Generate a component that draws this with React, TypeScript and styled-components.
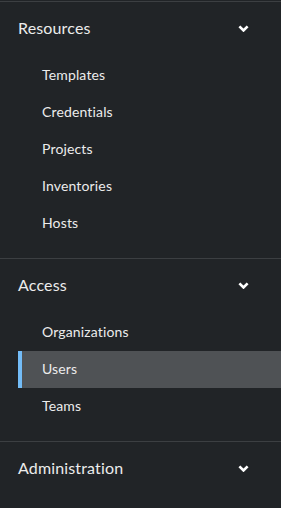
import styled, { createGlobalStyle } from 'styled-components';

type TSection = {
  title: string;
  items: string[];
};

const sections: TSection[] = [
  { title: 'Resources', items: ['Templates', 'Credentials', 'Projects', 'Inventories', 'Hosts'] },
  { title: 'Access', items: ['Organizations', 'Users', 'Teams'] },
  { title: 'Administration', items: [] },
];

const ACTIVE = 'Users';

const GlobalStyle = createGlobalStyle`
  html, body {
    margin: 0;
    padding: 0;
    background: #212427;
  }
  body {
    font-family: Lato, "Liberation Sans", sans-serif;
    -webkit-font-smoothing: antialiased;
  }
`;

function Chevron() {
  return (
    <svg width='11' height='7' viewBox='0 0 11 7' aria-hidden>
      <path d='M1.4 1.4 L5.5 5.4 L9.6 1.4' fill='none' stroke='#ffffff' strokeWidth='2.7' strokeLinejoin='miter' />
    </svg>
  );
}

export default function App() {
  return (
    <>
      <GlobalStyle />
      <StyledNav>
        {sections.map((section) => (
          <StyledSection key={section.title}>
            <StyledToggle>
              <StyledTitle>{section.title}</StyledTitle>
              <Chevron />
            </StyledToggle>
            {section.items.length > 0 && (
              <StyledList>
                {section.items.map((item) => (
                  <StyledItem key={item} active={item === ACTIVE}>
                    <StyledLabel>{item}</StyledLabel>
                  </StyledItem>
                ))}
              </StyledList>
            )}
          </StyledSection>
        ))}
      </StyledNav>
    </>
  );
}

const StyledNav = styled.nav`
  width: 281px;
  height: 508px;
  padding-top: 1px;
  box-sizing: border-box;
  background: #212427;
  overflow: hidden;
`;

const StyledSection = styled.section`
  border-top: 1px solid #3c3f42;
  padding: 8px 0 16px;
`;

const StyledToggle = styled.div`
  display: flex;
  align-items: center;
  justify-content: space-between;
  box-sizing: border-box;
  height: 37px;
  padding: 0 32px 0 18px;
`;

const StyledTitle = styled.span`
  font-size: 16px;
  letter-spacing: 0.15px;
  color: #ececec;
  padding-bottom: 2px;
`;

const StyledList = styled.ul`
  list-style: none;
  margin: 10px 0 0;
  padding: 0;
`;

const StyledItem = styled.li<{ active: boolean }>`
  display: flex;
  align-items: center;
  box-sizing: border-box;
  height: 37px;
  margin-left: 18px;
  padding-left: 20px;
  border-left: 4px solid ${({ active }) => (active ? '#73bcf7' : 'transparent')};
  background: ${({ active }) => (active ? '#4f5255' : 'transparent')};
`;

const StyledLabel = styled.span`
  font-size: 14px;
  letter-spacing: 0.15px;
  color: #ececec;
  padding-bottom: 2px;
`;
